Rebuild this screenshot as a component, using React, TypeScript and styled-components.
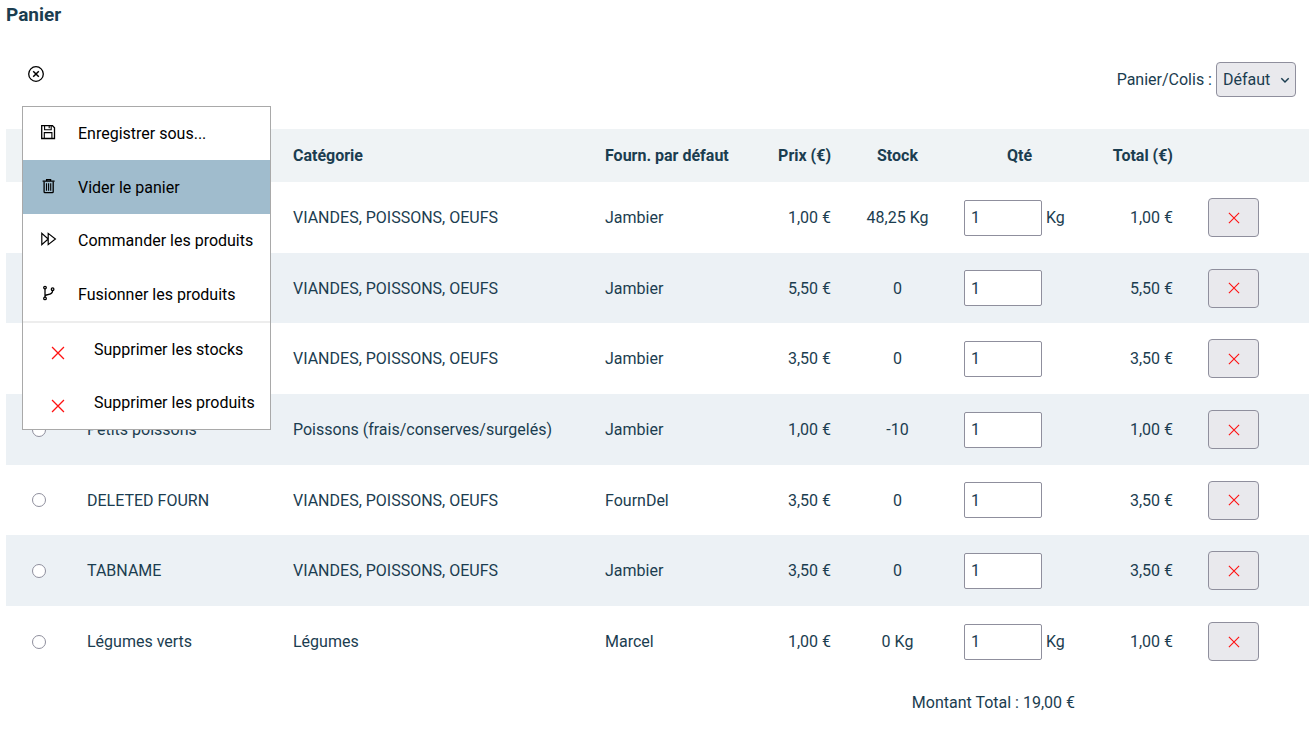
import React from 'react';
import styled, { createGlobalStyle } from 'styled-components';

const GlobalStyle = createGlobalStyle`
  *, *::before, *::after { box-sizing: border-box; }
  body {
    margin: 0;
    background: #fff;
    color: #1b3d50;
    font: 16px/21px Roboto, "Liberation Sans", sans-serif;
  }
`;

const Page = styled.main`
  position: relative;
  padding-left: 6px;
`;

const Title = styled.h1`
  margin: 0;
  padding-top: 4px;
  font-size: 19px;
  line-height: 21px;
  font-weight: 700;
`;

const Toolbar = styled.div`
  display: flex;
  align-items: center;
  justify-content: space-between;
  margin-top: 37px;
  padding: 0 13px 0 20px;
`;

const MenuToggle = styled.button`
  display: flex;
  padding: 0 0 12px;
  border: 0;
  background: none;
  color: #000;
`;

const Field = styled.div`
  display: flex;
  align-items: center;
  gap: 4px;
`;

const SelectWrap = styled.div`
  position: relative;
  color: #1b3d50;

  svg {
    position: absolute;
    right: 6px;
    top: 13px;
    pointer-events: none;
  }
`;

const Select = styled.select`
  appearance: none;
  display: block;
  width: 80px;
  height: 35px;
  padding: 0 6px;
  border: 1px solid #8f8f9d;
  border-radius: 4px;
  background: #e9e9ed;
  color: inherit;
  font: inherit;
`;

const Menu = styled.ul`
  position: absolute;
  z-index: 1;
  top: 106px;
  left: 22px;
  width: 249px;
  margin: 0;
  padding: 0;
  list-style: none;
  display: grid;
  grid-template-rows: 53px 54px 53px 54px 2px 53px 53px;
  border: 1px solid #a9a9a9;
  background: #fff;
  color: #000;
`;

const MenuSeparator = styled.li`
  background: #ededed;
`;

const MenuItem = styled.li`
  display: grid;
`;

const MenuButton = styled.button<{ $active?: boolean; $danger?: boolean }>`
  display: flex;
  align-items: center;
  gap: ${p => (p.$danger ? 29 : 20)}px;
  padding: 0 0 0 ${p => (p.$danger ? 28 : 17)}px;
  border: 0;
  background: ${p => (p.$active ? '#a0bccd' : 'transparent')};
  color: inherit;
  font: inherit;
  text-align: left;

  svg {
    flex: none;
    margin-${p => (p.$danger ? 'top' : 'bottom')}: ${p => (p.$danger ? 6 : 3)}px;
  }
`;

const Table = styled.table`
  width: 100%;
  margin-top: 32px;
  border-collapse: collapse;
  table-layout: fixed;
`;

const Col = styled.col<{ $width?: number }>`
  width: ${p => (p.$width ? `${p.$width}px` : 'auto')};
`;

type Align = 'left' | 'center' | 'right';

const Head = styled.th<{ $align?: Align }>`
  height: 53px;
  padding: 0 16px;
  background: #eff3f5;
  font-weight: 700;
  text-align: ${p => p.$align ?? 'left'};
`;

const Row = styled.tr`
  height: 71px;

  &:nth-child(even) {
    background: #ecf1f5;
  }

  &:nth-child(3n + 2) {
    height: 70px;
  }
`;

const Cell = styled.td<{ $align?: Align }>`
  padding: 0 16px;
  text-align: ${p => p.$align ?? 'left'};
  white-space: nowrap;
`;

const ActionCell = styled(Cell)`
  padding-left: 19px;
`;

const TotalCell = styled(Cell)`
  height: 51px;
`;

const Radio = styled.input`
  appearance: none;
  display: block;
  width: 14px;
  height: 14px;
  margin: 0 auto;
  border: 1px solid #8f8f9d;
  border-radius: 50%;
  background: #fff;

  &:checked { background: #1b3d50; }
`;

const Quantity = styled.label`
  display: flex;
  align-items: center;
  gap: 4px;
`;

const QuantityInput = styled.input`
  width: 78px;
  height: 36px;
  padding: 0 6px;
  border: 1px solid #8f8f9d;
  border-radius: 2px;
  background: #fff;
  color: inherit;
  font: inherit;
`;

const RemoveButton = styled.button`
  display: flex;
  align-items: center;
  justify-content: center;
  width: 51px;
  height: 39px;
  padding: 0;
  border: 1px solid #8f8f9d;
  border-radius: 4px;
  background: #e9e9ed;
`;

const iconProps = {
  width: 18,
  height: 18,
  viewBox: '0 0 18 18',
  fill: 'none',
  stroke: 'currentColor',
  strokeWidth: 1.3,
  'aria-hidden': true,
} as const;

const CloseCircleIcon = () => (
  <svg {...iconProps} width={20} height={20} viewBox="0 0 20 20" strokeWidth={1.3}>
    <circle cx="10" cy="10" r="7.3" />
    <path d="M7.2 7.2l5.6 5.6M12.8 7.2l-5.6 5.6" strokeWidth="1.5" />
  </svg>
);

const SaveIcon = () => (
  <svg {...iconProps}>
    <path d="M1.7 2.7h10.8l2 2v10.8H1.7z" />
    <path d="M4.6 3v3.7h6.6V3M9.2 3v2.2M4.3 15.3V9.6h7.6v5.7" strokeWidth="1.1" />
  </svg>
);

const TrashIcon = () => (
  <svg {...iconProps}>
    <path d="M2.6 4.2h12M6.6 4V2.7h4V4" />
    <path d="M4.1 4.4v10.3c0 .6.3.9.9.9h7.3c.6 0 .9-.3.9-.9V4.4" />
    <path d="M6.5 6.3v7.5M8.6 6.3v7.5M10.7 6.3v7.5" strokeWidth="1.1" />
  </svg>
);

const ForwardIcon = () => (
  <svg {...iconProps} strokeWidth={1.2}>
    <path d="M1.8 3.4v11.2L8.2 9zM8.2 3.4v11.2L15.4 9z" />
  </svg>
);

const MergeIcon = () => (
  <svg {...iconProps} strokeWidth={1.3}>
    <circle cx="5" cy="3.6" r="1.3" />
    <circle cx="5" cy="14.4" r="1.3" />
    <circle cx="12.6" cy="5.2" r="1.3" />
    <path d="M5 4.9v8.2M12.6 6.5c0 3.6-2.3 3.5-4.5 4-1.7.3-2.7.6-3.1 1.8" />
  </svg>
);

const CrossIcon = ({ size }: { size: number }) => (
  <svg width={size} height={size} viewBox="0 0 12 12" fill="none" stroke="#f11" strokeWidth="1.1" aria-hidden="true">
    <path d="M.9.9l10.2 10.2M11.1.9L.9 11.1" />
  </svg>
);

const ChevronIcon = () => (
  <svg width="10" height="10" viewBox="0 0 10 10" fill="none" stroke="currentColor" strokeWidth="1.5" aria-hidden="true">
    <path d="M1.3 3.3L5 7l3.7-3.7" />
  </svg>
);

const actions = [
  { label: 'Enregistrer sous...', icon: <SaveIcon /> },
  { label: 'Vider le panier', icon: <TrashIcon />, active: true },
  { label: 'Commander les produits', icon: <ForwardIcon /> },
  { label: 'Fusionner les produits', icon: <MergeIcon /> },
];

const deletions = ['Supprimer les stocks', 'Supprimer les produits'];

const meat = 'VIANDES, POISSONS, OEUFS';

const products = [
  { name: '', category: meat, supplier: 'Jambier', price: '1,00 €', stock: '48,25 Kg', unit: 'Kg' },
  { name: '', category: meat, supplier: 'Jambier', price: '5,50 €', stock: '0' },
  { name: '', category: meat, supplier: 'Jambier', price: '3,50 €', stock: '0' },
  { name: 'Petits poissons', category: 'Poissons (frais/conserves/surgelés)', supplier: 'Jambier', price: '1,00 €', stock: '-10' },
  { name: 'DELETED FOURN', category: meat, supplier: 'FournDel', price: '3,50 €', stock: '0' },
  { name: 'TABNAME', category: meat, supplier: 'Jambier', price: '3,50 €', stock: '0' },
  { name: 'Légumes verts', category: 'Légumes', supplier: 'Marcel', price: '1,00 €', stock: '0 Kg', unit: 'Kg' },
];

export default function App() {
  return (
    <Page>
      <GlobalStyle />
      <Title>Panier</Title>
      <Toolbar>
        <MenuToggle type="button" aria-label="Fermer le menu" aria-expanded="true">
          <CloseCircleIcon />
        </MenuToggle>
        <Field>
          <label htmlFor="basket">Panier/Colis :</label>
          <SelectWrap>
            <Select id="basket">
              <option>Défaut</option>
            </Select>
            <ChevronIcon />
          </SelectWrap>
        </Field>
      </Toolbar>

      <Menu>
        {actions.map(a => (
          <MenuItem key={a.label}>
            <MenuButton type="button" $active={a.active}>
              {a.icon}
              {a.label}
            </MenuButton>
          </MenuItem>
        ))}
        <MenuSeparator role="separator" />
        {deletions.map(label => (
          <MenuItem key={label}>
            <MenuButton type="button" $danger>
              <CrossIcon size={14} />
              {label}
            </MenuButton>
          </MenuItem>
        ))}
      </Menu>

      <Table>
        <colgroup>
          <Col $width={65} />
          <Col $width={206} />
          <Col />
          <Col $width={156} />
          <Col $width={102} />
          <Col $width={101} />
          <Col $width={143} />
          <Col $width={98} />
          <Col $width={120} />
        </colgroup>
        <thead>
          <tr>
            <Head />
            <Head />
            <Head>Catégorie</Head>
            <Head>Fourn. par défaut</Head>
            <Head $align="right">Prix (€)</Head>
            <Head $align="center">Stock</Head>
            <Head $align="center">Qté</Head>
            <Head $align="right">Total (€)</Head>
            <Head />
          </tr>
        </thead>
        <tbody>
          {products.map((p, i) => (
            <Row key={i}>
              <Cell>
                <Radio type="radio" name="product" aria-label="Sélectionner le produit" />
              </Cell>
              <Cell>{p.name}</Cell>
              <Cell>{p.category}</Cell>
              <Cell>{p.supplier}</Cell>
              <Cell $align="right">{p.price}</Cell>
              <Cell $align="center">{p.stock}</Cell>
              <Cell>
                <Quantity>
                  <QuantityInput type="text" inputMode="decimal" defaultValue="1" aria-label="Quantité" />
                  {p.unit}
                </Quantity>
              </Cell>
              <Cell $align="right">{p.price}</Cell>
              <ActionCell>
                <RemoveButton type="button" aria-label="Supprimer">
                  <CrossIcon size={12} />
                </RemoveButton>
              </ActionCell>
            </Row>
          ))}
        </tbody>
        <tfoot>
          <tr>
            <TotalCell colSpan={7} $align="right">Montant Total : 19,00 €</TotalCell>
            <TotalCell colSpan={2} />
          </tr>
        </tfoot>
      </Table>
    </Page>
  );
}
